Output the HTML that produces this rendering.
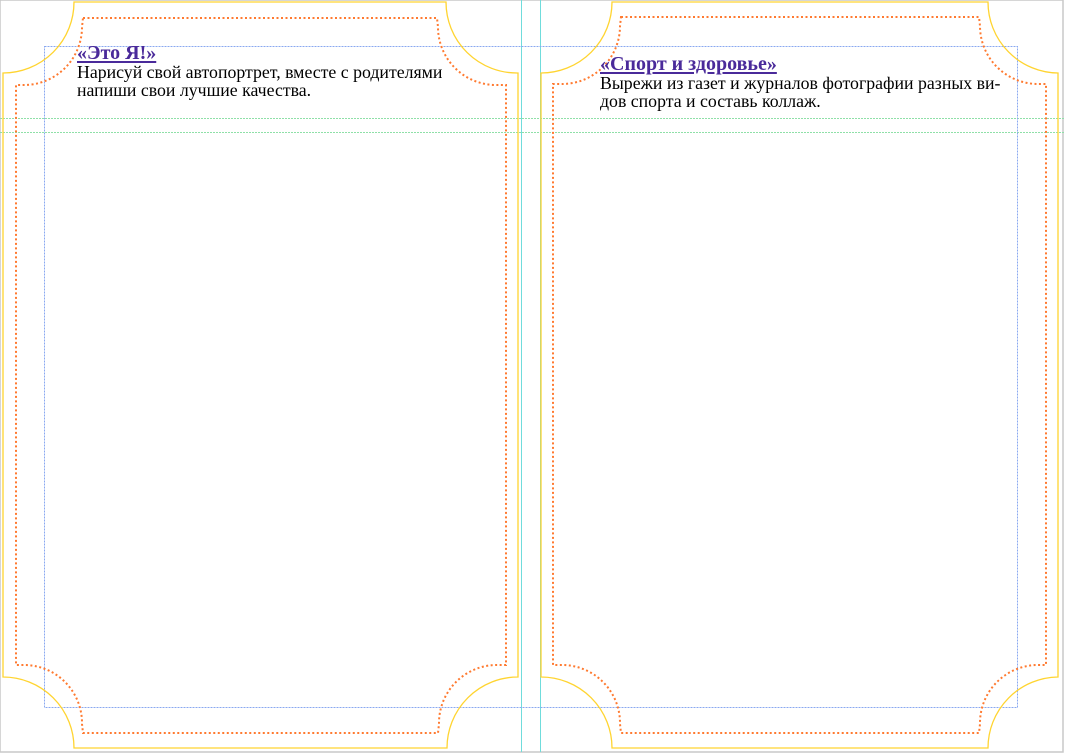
<!DOCTYPE html>
<html><head><meta charset="utf-8"><style>
body{margin:0;width:1065px;height:756px;background:#fff;position:relative;overflow:hidden;font-family:"Liberation Serif",serif}
svg{position:absolute;left:0;top:0}
.t{position:absolute;font-size:17.8px;line-height:18px;color:#000;white-space:nowrap}
.h{color:#4a2a9a;font-weight:bold;font-size:20px;text-decoration:underline;text-decoration-thickness:2px;text-underline-offset:2px;display:block;line-height:20px}
</style></head><body>
<svg width="1065" height="756" viewBox="0 0 1065 756">
<rect x="0" y="0" width="1063" height="752" fill="none" stroke="#c8c8c8" stroke-width="1.5"/>
<line x1="0" y1="118.5" x2="1065" y2="118.5" stroke="#8fe0a8" stroke-width="1" stroke-dasharray="2,1"/>
<line x1="0" y1="132.5" x2="1065" y2="132.5" stroke="#8fe0a8" stroke-width="1" stroke-dasharray="2,1"/>
<line x1="521.5" y1="0" x2="521.5" y2="752" stroke="#70dcdc" stroke-width="1"/>
<line x1="540.5" y1="0" x2="540.5" y2="752" stroke="#70dcdc" stroke-width="1"/>
<rect x="44.5" y="46.5" width="973" height="661" fill="none" stroke="#8aa8f0" stroke-width="1" stroke-dasharray="2,1"/>
<path d="M74,2 L446,2 A71,71 0 0 0 518,73 L518,677 A71,71 0 0 0 447,748 L74,748 A71,71 0 0 0 3,677 L3,73 A71,71 0 0 0 74,2 Z" fill="none" stroke="#ffd430" stroke-width="1.3"/>
<path d="M83,18 L437,18 L438,27 A58,58 0 0 0 497,85 L506,85 L506,665 L497,665 A58,58 0 0 0 439,724 L438,733 L83,733 L82,724 A58,58 0 0 0 24,665 L16,665 L16,85 L24,85 A58,58 0 0 0 82,27 Z" fill="none" stroke="#ff7a30" stroke-width="2" stroke-dasharray="2,2.5"/>
<path d="M612,2 L988,2 A71,71 0 0 0 1058,73 L1058,677 A71,71 0 0 0 988,748 L612,748 A71,71 0 0 0 541,677 L541,73 A71,71 0 0 0 612,2 Z" fill="none" stroke="#ffd430" stroke-width="1.3"/>
<path d="M621,17 L979,17 L980,26 A58,58 0 0 0 1038,84 L1046,84 L1046,665 L1038,665 A58,58 0 0 0 980,724 L979,733 L621,733 L620,724 A58,58 0 0 0 562,665 L553,665 L553,84 L562,84 A58,58 0 0 0 620,26 Z" fill="none" stroke="#ff7a30" stroke-width="2" stroke-dasharray="2,2.5"/>
</svg>
<div class="t" style="left:77px;top:43px"><span class="h">«Это Я!»</span>Нарисуй свой автопортрет, вместе с родителями<br>напиши свои лучшие качества.</div>
<div class="t" style="left:600px;top:54px"><span class="h">«Спорт и здоровье»</span>Вырежи из газет и журналов фотографии разных ви-<br>дов спорта и составь коллаж.</div>
</body></html>
